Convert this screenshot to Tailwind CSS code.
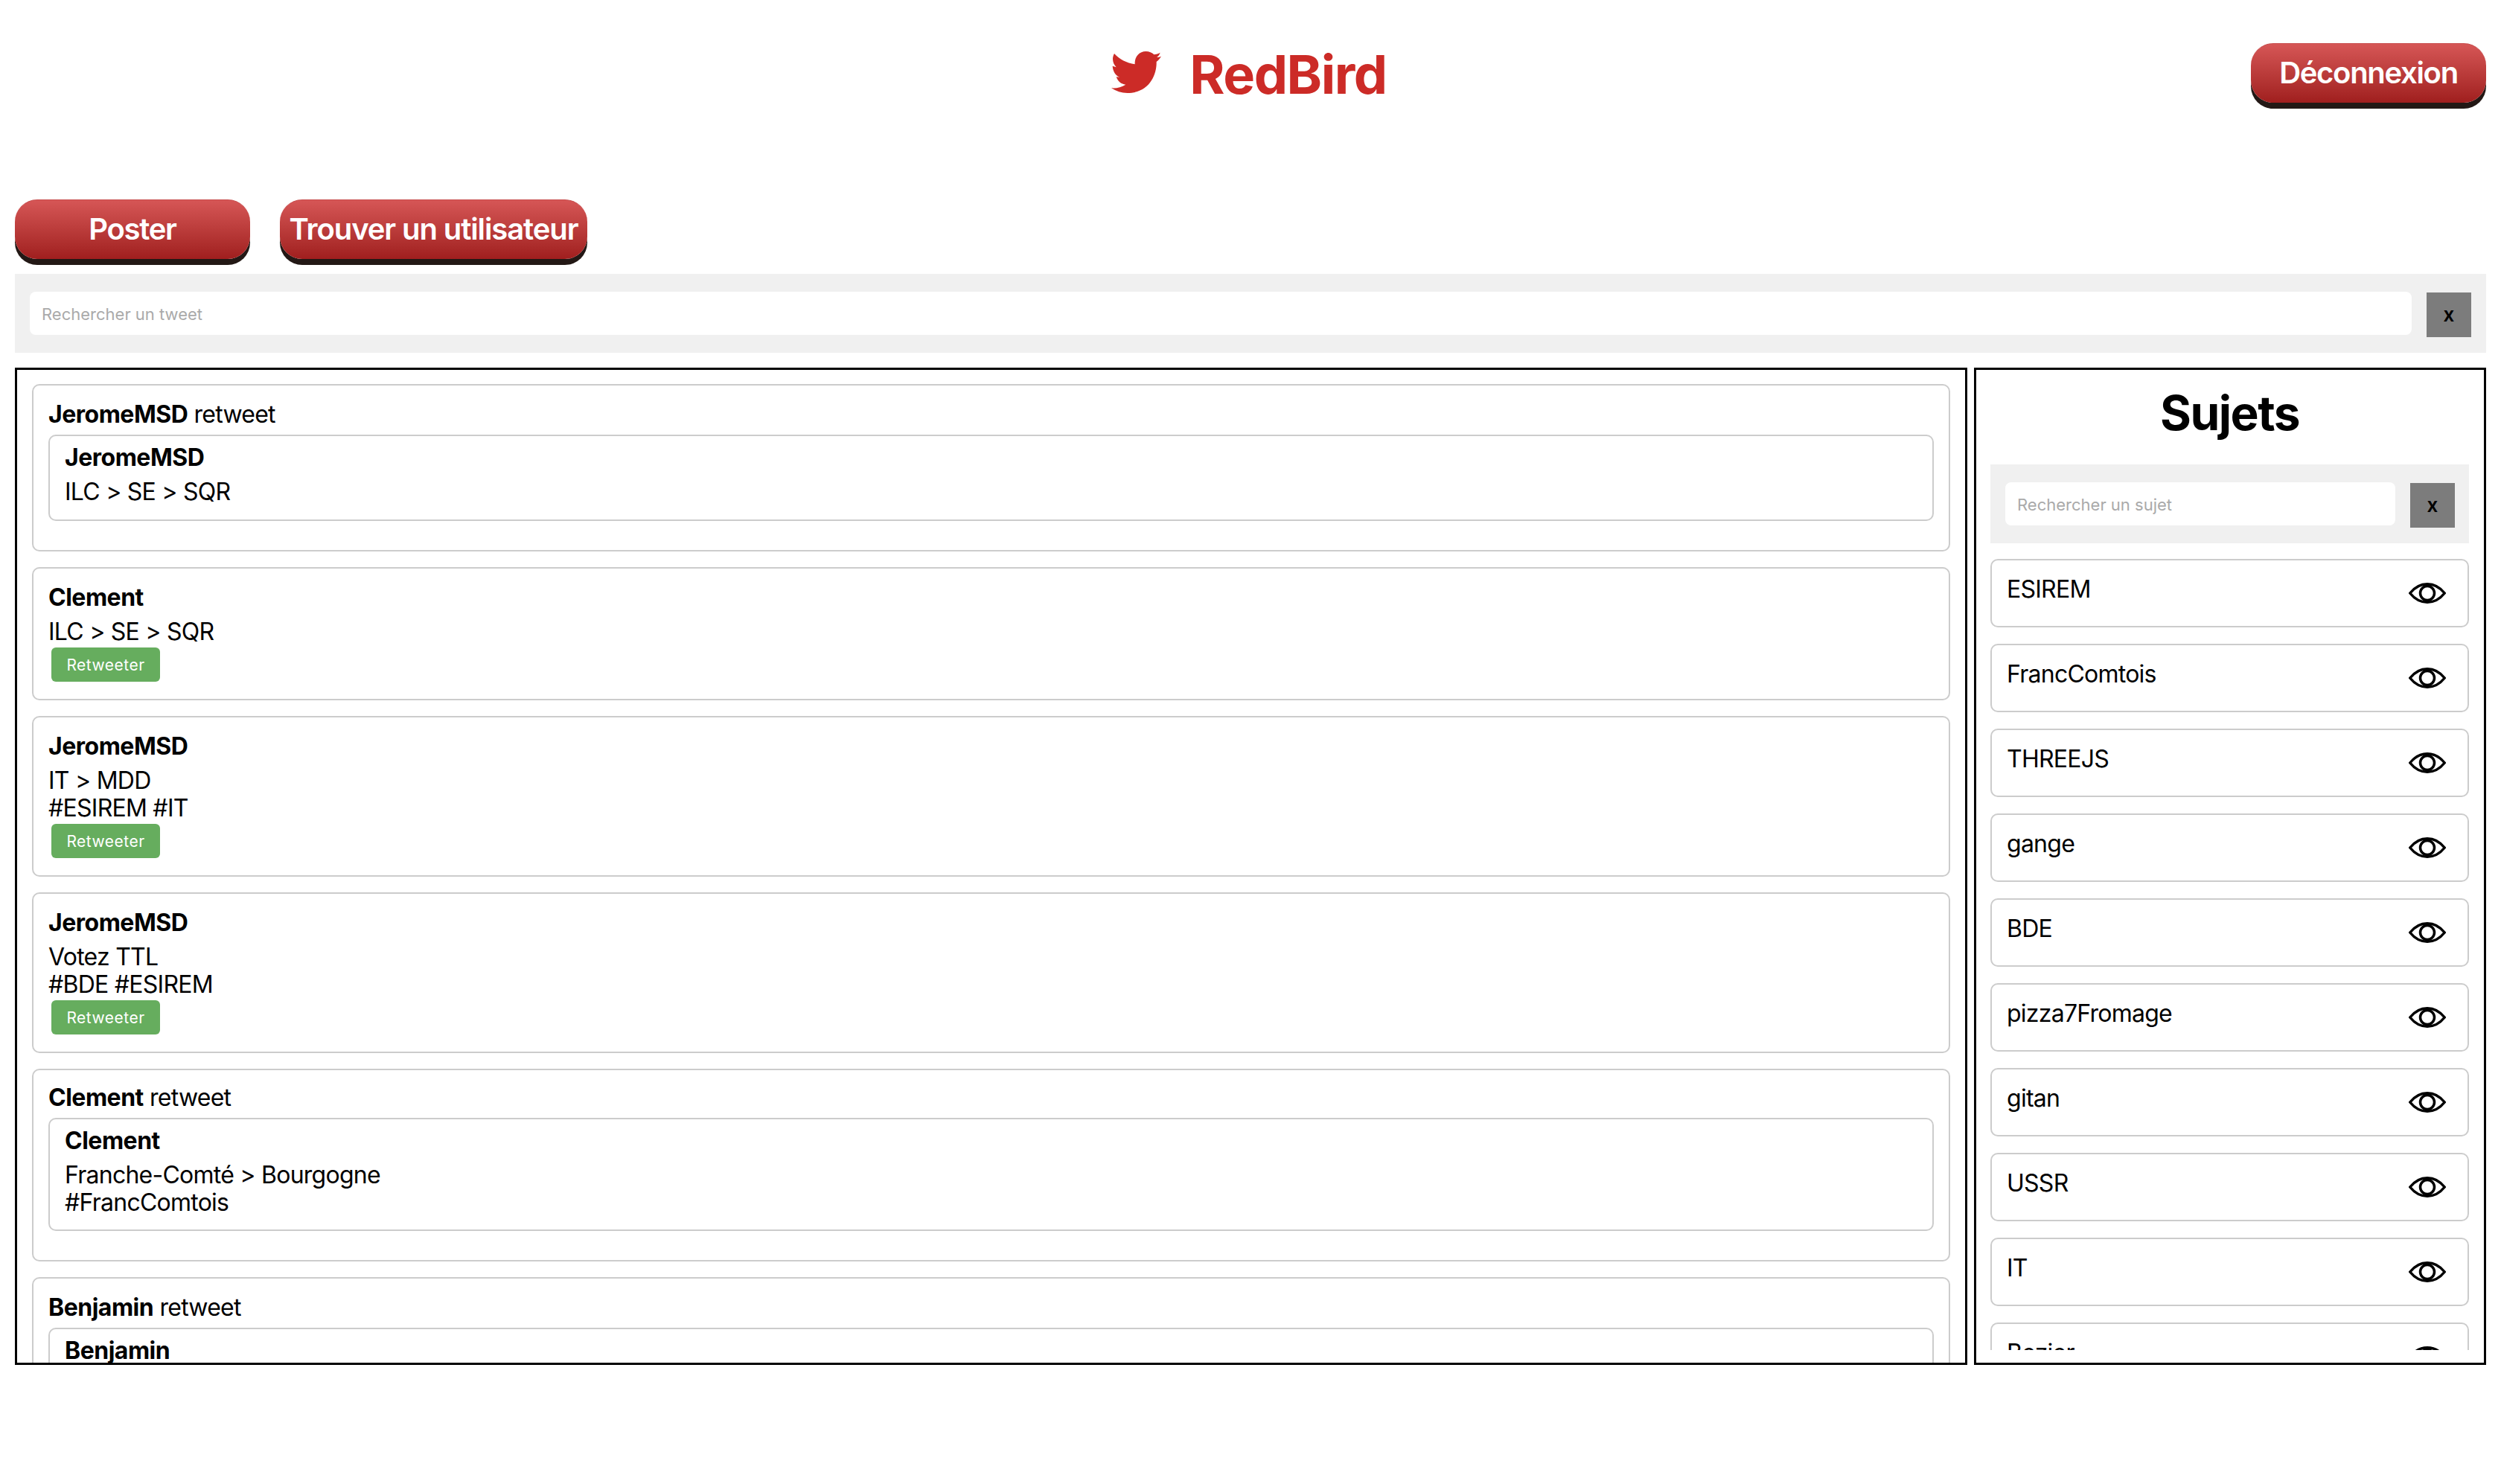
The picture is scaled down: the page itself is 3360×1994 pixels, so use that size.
<!DOCTYPE html>
<html lang="fr">

<head>
    <meta charset="UTF-8">
    <meta name="viewport" content="width=device-width, initial-scale=1.0">
    <script src="https://cdn.jsdelivr.net/npm/@tailwindcss/browser@4"></script>
    <title>RedBird</title>
</head>

<body class="bg-white text-black font-['Inter',sans-serif] text-[32px] leading-[37px] tracking-[-0.75px] min-h-[1994px] px-[20px]">
    <!-- Header -->
    <header class="relative h-[268px] flex justify-center items-start pt-[69px]">
        <div class="flex items-start gap-[38px] text-[#cc2b27] ml-[-4px]">
            <svg class="w-[67px] h-[56px] shrink-0" viewBox="285 148 201 168" fill="currentColor">
                <path d="M297 157C318 180 347 195 380 200C378 170 398 148 424 148C438 148 449 153 457 161C466 160 475 157 482 153C479 161 474 168 468 172C475 172 481 170 486 168C481 176 475 184 467 190C469 240 440 316 350 316C326 316 304 309 285 296C305 298 326 293 343 282C325 281 311 268 305 251L318 252C303 246 291 228 290 207L305 212C291 198 286 176 297 157Z"></path>
            </svg>
            <h1 class="text-[72px] leading-[56px] mt-[3px] font-bold tracking-[-1.5px]">RedBird</h1>
        </div>
        <button class="absolute right-0 top-[58px] w-[316px] h-[80px] pb-[3px] border-t border-[#c64a4a] rounded-[30px] bg-gradient-to-b from-[#d65656] to-[#a01e1e] shadow-[0_8px_0_#231815] text-white text-[40px] font-semibold tracking-[-1.3px]">Déconnexion</button>
    </header>

    <!-- Actions -->
    <div class="flex gap-[40px] h-[100px]">
        <button class="w-[316px] h-[80px] pb-[3px] border-t border-[#c64a4a] rounded-[30px] bg-gradient-to-b from-[#d65656] to-[#a01e1e] shadow-[0_8px_0_#231815] text-white text-[40px] font-semibold tracking-[-1.3px]">Poster</button>
        <button class="w-[413px] h-[80px] pb-[3px] border-t border-[#c64a4a] rounded-[30px] bg-gradient-to-b from-[#d65656] to-[#a01e1e] shadow-[0_8px_0_#231815] text-white text-[40px] font-semibold tracking-[-1.1px] whitespace-nowrap">Trouver un utilisateur</button>
    </div>

    <!-- Tweet search -->
    <div class="h-[106px] bg-[#f0f0f0] flex items-center pl-[20px] pr-[20px] gap-[20px]">
        <input type="text" placeholder="Rechercher un tweet" class="flex-1 h-[58px] rounded-[8px] bg-white px-[16px] pt-[2px] text-[22px] tracking-normal placeholder:text-[#aaaaaa] outline-none">
        <button class="w-[60px] h-[60px] pb-[2px] bg-[#7c7c7c] text-[26px] font-semibold mt-[4px] tracking-normal">x</button>
    </div>

    <!-- Main -->
    <main class="flex gap-[9px] mt-[20px] h-[1340px]">
        <!-- Tweets -->
        <section class="w-[2623px] border-[3px] border-black px-[20px] pt-[19px] overflow-hidden">

            <article class="border-2 border-[#cccccc] rounded-[10px] px-[20px] pt-[20px] pb-[39px] mb-[21px]">
                <p class="h-[38px] leading-[38px]"><b class="font-bold tracking-[-0.5px]">JeromeMSD</b> retweet</p>
                <div class="border-2 border-[#cccccc] rounded-[10px] px-[20px] pt-[10px] pb-[19px] mt-[8px]">
                    <p class="h-[38px] leading-[38px] font-bold tracking-[-0.5px]">JeromeMSD</p>
                    <p class="mt-[8px]">ILC &gt; SE &gt; SQR</p>
                </div>
            </article>

            <article class="border-2 border-[#cccccc] rounded-[10px] px-[20px] pt-[20px] pb-[20px] mb-[21px]">
                <p class="h-[38px] leading-[38px] font-bold tracking-[-0.5px]">Clement</p>
                <p class="mt-[8px]">ILC &gt; SE &gt; SQR</p>
                <button class="block w-[146px] h-[46px] ml-[4px] mt-[3px] mb-[3px] rounded-[6px] bg-[#66ad5e] text-white text-[21px] tracking-[0.5px]">Retweeter</button>
            </article>

            <article class="border-2 border-[#cccccc] rounded-[10px] px-[20px] pt-[20px] pb-[20px] mb-[21px]">
                <p class="h-[38px] leading-[38px] font-bold tracking-[-0.5px]">JeromeMSD</p>
                <p class="mt-[8px]">IT &gt; MDD<br>#ESIREM #IT</p>
                <button class="block w-[146px] h-[46px] ml-[4px] mt-[3px] mb-[3px] rounded-[6px] bg-[#66ad5e] text-white text-[21px] tracking-[0.5px]">Retweeter</button>
            </article>

            <article class="border-2 border-[#cccccc] rounded-[10px] px-[20px] pt-[20px] pb-[20px] mb-[21px]">
                <p class="h-[38px] leading-[38px] font-bold tracking-[-0.5px]">JeromeMSD</p>
                <p class="mt-[8px]">Votez TTL<br>#BDE #ESIREM</p>
                <button class="block w-[146px] h-[46px] ml-[4px] mt-[3px] mb-[3px] rounded-[6px] bg-[#66ad5e] text-white text-[21px] tracking-[0.5px]">Retweeter</button>
            </article>

            <article class="border-2 border-[#cccccc] rounded-[10px] px-[20px] pt-[18px] pb-[39px] mb-[21px]">
                <p class="h-[38px] leading-[38px]"><b class="font-bold tracking-[-0.5px]">Clement</b> retweet</p>
                <div class="border-2 border-[#cccccc] rounded-[10px] px-[20px] pt-[10px] pb-[18px] mt-[8px]">
                    <p class="h-[38px] leading-[38px] font-bold tracking-[-0.5px]">Clement</p>
                    <p class="mt-[8px]">Franche-Comté &gt; Bourgogne<br>#FrancComtois</p>
                </div>
            </article>

            <article class="border-2 border-[#cccccc] rounded-[10px] px-[20px] pt-[20px] pb-[39px] mb-[21px]">
                <p class="h-[38px] leading-[38px]"><b class="font-bold tracking-[-0.5px]">Benjamin</b> retweet</p>
                <div class="border-2 border-[#cccccc] rounded-[10px] px-[20px] pt-[10px] pb-[19px] mt-[8px]">
                    <p class="h-[38px] leading-[38px] font-bold tracking-[-0.5px]">Benjamin</p>
                </div>
            </article>
        </section>

        <!-- Subjects -->
        <aside class="flex-1 min-w-0 border-[3px] border-black pl-[19px] pr-[20px] pb-[17px] flex flex-col">
            <h2 class="h-[127px] shrink-0 text-center text-[64px] leading-[116px] font-bold tracking-[-1.5px]">Sujets</h2>
            <div class="h-[106px] shrink-0 bg-[#f0f0f0] flex items-center pl-[20px] pr-[19px] gap-[20px]">
                <input type="text" placeholder="Rechercher un sujet" class="flex-1 min-w-0 h-[58px] rounded-[8px] bg-white px-[16px] pt-[2px] text-[22px] tracking-normal placeholder:text-[#aaaaaa] outline-none">
                <button class="w-[60px] h-[60px] pb-[2px] bg-[#7c7c7c] text-[26px] font-semibold mt-[4px] tracking-normal">x</button>
            </div>
            <ul class="flex-1 min-h-0 overflow-hidden mt-[21px] flex flex-col gap-[22px]">
                <li class="h-[92px] shrink-0 border-2 border-[#cccccc] rounded-[10px] pl-[20px] pr-[29px] pt-[20px] flex justify-between items-start"><span class="leading-[38px]">ESIREM</span><svg class="w-[50px] h-[28px] mt-[10px]" viewBox="0 0 50 28" fill="none" stroke="currentColor" stroke-width="3.5" stroke-linejoin="round"><path d="M1.75 14C9 5 17 1.75 25 1.75S41 5 48.25 14C41 23 33 26.25 25 26.25S9 23 1.75 14Z"></path><circle cx="25" cy="14" r="9.5"></circle></svg></li>
                <li class="h-[92px] shrink-0 border-2 border-[#cccccc] rounded-[10px] pl-[20px] pr-[29px] pt-[20px] flex justify-between items-start"><span class="leading-[38px]">FrancComtois</span><svg class="w-[50px] h-[28px] mt-[10px]" viewBox="0 0 50 28" fill="none" stroke="currentColor" stroke-width="3.5" stroke-linejoin="round"><path d="M1.75 14C9 5 17 1.75 25 1.75S41 5 48.25 14C41 23 33 26.25 25 26.25S9 23 1.75 14Z"></path><circle cx="25" cy="14" r="9.5"></circle></svg></li>
                <li class="h-[92px] shrink-0 border-2 border-[#cccccc] rounded-[10px] pl-[20px] pr-[29px] pt-[20px] flex justify-between items-start"><span class="leading-[38px]">THREEJS</span><svg class="w-[50px] h-[28px] mt-[10px]" viewBox="0 0 50 28" fill="none" stroke="currentColor" stroke-width="3.5" stroke-linejoin="round"><path d="M1.75 14C9 5 17 1.75 25 1.75S41 5 48.25 14C41 23 33 26.25 25 26.25S9 23 1.75 14Z"></path><circle cx="25" cy="14" r="9.5"></circle></svg></li>
                <li class="h-[92px] shrink-0 border-2 border-[#cccccc] rounded-[10px] pl-[20px] pr-[29px] pt-[20px] flex justify-between items-start"><span class="leading-[38px]">gange</span><svg class="w-[50px] h-[28px] mt-[10px]" viewBox="0 0 50 28" fill="none" stroke="currentColor" stroke-width="3.5" stroke-linejoin="round"><path d="M1.75 14C9 5 17 1.75 25 1.75S41 5 48.25 14C41 23 33 26.25 25 26.25S9 23 1.75 14Z"></path><circle cx="25" cy="14" r="9.5"></circle></svg></li>
                <li class="h-[92px] shrink-0 border-2 border-[#cccccc] rounded-[10px] pl-[20px] pr-[29px] pt-[20px] flex justify-between items-start"><span class="leading-[38px]">BDE</span><svg class="w-[50px] h-[28px] mt-[10px]" viewBox="0 0 50 28" fill="none" stroke="currentColor" stroke-width="3.5" stroke-linejoin="round"><path d="M1.75 14C9 5 17 1.75 25 1.75S41 5 48.25 14C41 23 33 26.25 25 26.25S9 23 1.75 14Z"></path><circle cx="25" cy="14" r="9.5"></circle></svg></li>
                <li class="h-[92px] shrink-0 border-2 border-[#cccccc] rounded-[10px] pl-[20px] pr-[29px] pt-[20px] flex justify-between items-start"><span class="leading-[38px]">pizza7Fromage</span><svg class="w-[50px] h-[28px] mt-[10px]" viewBox="0 0 50 28" fill="none" stroke="currentColor" stroke-width="3.5" stroke-linejoin="round"><path d="M1.75 14C9 5 17 1.75 25 1.75S41 5 48.25 14C41 23 33 26.25 25 26.25S9 23 1.75 14Z"></path><circle cx="25" cy="14" r="9.5"></circle></svg></li>
                <li class="h-[92px] shrink-0 border-2 border-[#cccccc] rounded-[10px] pl-[20px] pr-[29px] pt-[20px] flex justify-between items-start"><span class="leading-[38px]">gitan</span><svg class="w-[50px] h-[28px] mt-[10px]" viewBox="0 0 50 28" fill="none" stroke="currentColor" stroke-width="3.5" stroke-linejoin="round"><path d="M1.75 14C9 5 17 1.75 25 1.75S41 5 48.25 14C41 23 33 26.25 25 26.25S9 23 1.75 14Z"></path><circle cx="25" cy="14" r="9.5"></circle></svg></li>
                <li class="h-[92px] shrink-0 border-2 border-[#cccccc] rounded-[10px] pl-[20px] pr-[29px] pt-[20px] flex justify-between items-start"><span class="leading-[38px]">USSR</span><svg class="w-[50px] h-[28px] mt-[10px]" viewBox="0 0 50 28" fill="none" stroke="currentColor" stroke-width="3.5" stroke-linejoin="round"><path d="M1.75 14C9 5 17 1.75 25 1.75S41 5 48.25 14C41 23 33 26.25 25 26.25S9 23 1.75 14Z"></path><circle cx="25" cy="14" r="9.5"></circle></svg></li>
                <li class="h-[92px] shrink-0 border-2 border-[#cccccc] rounded-[10px] pl-[20px] pr-[29px] pt-[20px] flex justify-between items-start"><span class="leading-[38px]">IT</span><svg class="w-[50px] h-[28px] mt-[10px]" viewBox="0 0 50 28" fill="none" stroke="currentColor" stroke-width="3.5" stroke-linejoin="round"><path d="M1.75 14C9 5 17 1.75 25 1.75S41 5 48.25 14C41 23 33 26.25 25 26.25S9 23 1.75 14Z"></path><circle cx="25" cy="14" r="9.5"></circle></svg></li>
                <li class="h-[92px] shrink-0 border-2 border-[#cccccc] rounded-[10px] pl-[20px] pr-[29px] pt-[20px] flex justify-between items-start"><span class="leading-[38px]">Bezier</span><svg class="w-[50px] h-[28px] mt-[10px]" viewBox="0 0 50 28" fill="none" stroke="currentColor" stroke-width="3.5" stroke-linejoin="round"><path d="M1.75 14C9 5 17 1.75 25 1.75S41 5 48.25 14C41 23 33 26.25 25 26.25S9 23 1.75 14Z"></path><circle cx="25" cy="14" r="9.5"></circle></svg></li>
            </ul>
        </aside>
    </main>
</body>

</html>
